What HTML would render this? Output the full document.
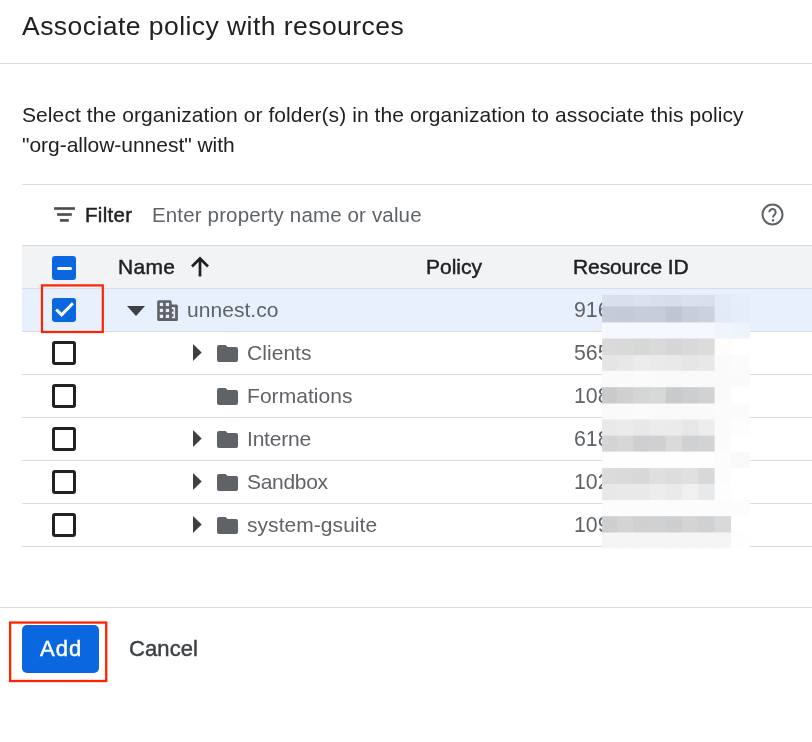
<!DOCTYPE html>
<html><head><meta charset="utf-8">
<style>
html,body{margin:0;padding:0;background:#fff;width:812px;height:742px;overflow:hidden;position:relative}
body{font-family:"Liberation Sans",sans-serif;color:#202124;-webkit-font-smoothing:antialiased}
.t,.rt,.num{will-change:transform}
.a{position:absolute}
.t{position:absolute;white-space:nowrap;line-height:1}
.hl{position:absolute;height:1px;background:#dadce0}
.cb{position:absolute;left:52px;width:18px;height:18px;border:3px solid #202124;border-radius:3px}
.cbf{position:absolute;left:52px;width:24px;height:24px;background:#0b67e0;border-radius:3px}
.rt{position:absolute;white-space:nowrap;line-height:1;font-size:21px;color:#5f6368;letter-spacing:0.05px;margin-top:-0.4px;margin-left:-0.5px}
.num{position:absolute;left:573.5px;white-space:nowrap;line-height:1;font-size:21.3px;color:#5f6368;margin-top:0.3px}
.tri{position:absolute;width:0;height:0;border-top:8.5px solid transparent;border-bottom:8.5px solid transparent;border-left:9px solid #3c4043}
.md{font-weight:normal;-webkit-text-stroke:0.45px currentColor}
.mz i{position:absolute;display:block}
</style></head><body>
<!-- title -->
<div class="t" style="left:22px;top:13.2px;font-size:26.5px;letter-spacing:0.45px;color:#202124">Associate policy with resources</div>
<div class="hl" style="left:0;top:63px;width:812px"></div>

<div class="t" style="left:22px;top:104.1px;font-size:21px;letter-spacing:0.09px">Select the organization or folder(s) in the organization to associate this policy</div>
<div class="t" style="left:22px;top:134.1px;font-size:21px;letter-spacing:-0.03px">"org-allow-unnest" with</div>

<!-- table -->
<div class="hl" style="left:22px;top:184px;width:790px"></div>
<!-- filter icon -->
<svg class="a" style="left:50px;top:204px" width="30" height="20" viewBox="50 204 30 20"><g fill="#474a4f">
<rect x="54.1" y="207.2" width="20.8" height="2.6"/><rect x="57.1" y="213.2" width="14.7" height="2.6"/><rect x="60" y="219.1" width="8.8" height="2.6"/></g></svg>
<div class="t md" style="left:84.5px;top:204.5px;font-size:20.5px;color:#202124;letter-spacing:0.3px">Filter</div>
<div class="t" style="left:152px;top:204.5px;font-size:20.5px;color:#5f6368;letter-spacing:0.15px">Enter property name or value</div>
<svg class="a" style="left:760px;top:202px" width="25" height="25" viewBox="0 0 25 25">
  <circle cx="12.5" cy="12.5" r="10" fill="none" stroke="#5f6368" stroke-width="2"/>
  <path d="M9.3 10.2a3.2 3.2 0 1 1 5.6 2.1c-1 1-1.9 1.5-1.9 3.2" fill="none" stroke="#5f6368" stroke-width="2"/>
  <rect x="11.9" y="17.2" width="2.2" height="2.2" fill="#5f6368"/>
</svg>

<!-- header -->
<div class="hl" style="left:22px;top:245px;width:790px"></div>
<div class="a" style="left:22px;top:246px;width:790px;height:42px;background:#f1f3f4"></div>
<div class="cbf" style="top:256px"></div>
<div class="a" style="left:57px;top:267px;width:15px;height:3px;background:#fff;border-radius:1.5px"></div>
<div class="t md" style="left:118px;top:256.1px;font-size:21px;color:#202124;letter-spacing:0.3px">Name</div>
<svg class="a" style="left:190px;top:256px" width="20" height="22" viewBox="0 0 20 22">
  <path d="M10 20.5V2.5M2 10.5L10 2.5L18 10.5" fill="none" stroke="#202124" stroke-width="2.7"/>
</svg>
<div class="t md" style="left:426px;top:256.1px;font-size:21px;color:#202124;letter-spacing:0px">Policy</div>
<div class="t md" style="left:573px;top:256.1px;font-size:21px;color:#202124;letter-spacing:-0.1px">Resource ID</div>
<div class="hl" style="left:22px;top:288px;width:790px"></div>

<!-- row 1 selected -->
<div class="a" style="left:22px;top:289px;width:790px;height:42px;background:#e8f0fe"></div>
<div class="cbf" style="top:298px"></div>
<svg class="a" style="left:52px;top:298px" width="24" height="24" viewBox="0 0 24 24">
  <path d="M4.2 11.5L9.6 16.9L20.9 5.3" fill="none" stroke="#fff" stroke-width="3"/>
</svg>
<div class="a" style="left:127px;top:306px;width:0;height:0;border-left:9px solid transparent;border-right:9px solid transparent;border-top:10px solid #3c4043"></div>
<svg class="a" style="left:154px;top:297px" width="28" height="26" viewBox="154 297 28 26">
  <path d="M157.2 301.7Q157.2 300.2 158.7 300.2H170.2Q171.7 300.2 171.7 301.7V304.5H176.4Q177.9 304.5 177.9 306V319.4Q177.9 320.9 176.4 320.9H158.7Q157.2 320.9 157.2 319.4Z" fill="#5f6368"/>
  <g fill="#e8f0fe">
    <rect x="159.8" y="302.8" width="3.3" height="3.3"/><rect x="165.8" y="302.8" width="3.3" height="3.3"/>
    <rect x="159.8" y="308.8" width="3.3" height="3.3"/><rect x="165.8" y="308.8" width="3.3" height="3.3"/>
    <rect x="159.8" y="314.7" width="3.3" height="3.3"/><rect x="165.8" y="314.7" width="3.3" height="3.3"/>
    <rect x="171.9" y="307.2" width="3.2" height="11"/>
  </g>
  <g fill="#5f6368"><rect x="171.9" y="309.1" width="1.6" height="2.6"/><rect x="171.9" y="313.8" width="1.6" height="2.8"/></g>
</svg>
<div class="rt" style="left:187px;top:299.5px">unnest.co</div>
<div class="num" style="top:299.5px">916</div>
<div class="hl" style="left:22px;top:331px;width:790px"></div>

<!-- row 2 -->
<div class="cb" style="top:341px"></div>
<svg class="a" style="left:190px;top:341px" width="16" height="24" viewBox="190 341 16 24"><polygon points="193,344.1 201.7,352.6 193,361.1" fill="#3c4043"/></svg>
<svg class="a fo" style="left:217px;top:345px" width="21" height="17" viewBox="0 0 21 17"><path d="M0 2Q0 0 2 0H8.6L10.6 2H19Q21 2 21 4V15Q21 17 19 17H2Q0 17 0 15Z" fill="#5f6368"/></svg>
<div class="rt" style="left:247px;top:342.5px">Clients</div>
<div class="num" style="top:342.5px">565</div>
<div class="hl" style="left:22px;top:374px;width:790px"></div>

<!-- row 3 -->
<div class="cb" style="top:384px"></div>
<svg class="a fo" style="left:217px;top:388px" width="21" height="17" viewBox="0 0 21 17"><path d="M0 2Q0 0 2 0H8.6L10.6 2H19Q21 2 21 4V15Q21 17 19 17H2Q0 17 0 15Z" fill="#5f6368"/></svg>
<div class="rt" style="left:247px;top:385.5px">Formations</div>
<div class="num" style="top:385.5px">108</div>
<div class="hl" style="left:22px;top:417px;width:790px"></div>

<!-- row 4 -->
<div class="cb" style="top:427px"></div>
<svg class="a" style="left:190px;top:427px" width="16" height="24" viewBox="190 427 16 24"><polygon points="193,430.1 201.7,438.6 193,447.1" fill="#3c4043"/></svg>
<svg class="a fo" style="left:217px;top:431px" width="21" height="17" viewBox="0 0 21 17"><path d="M0 2Q0 0 2 0H8.6L10.6 2H19Q21 2 21 4V15Q21 17 19 17H2Q0 17 0 15Z" fill="#5f6368"/></svg>
<div class="rt" style="left:247px;top:428.5px;letter-spacing:-0.2px">Interne</div>
<div class="num" style="top:428.5px">618</div>
<div class="hl" style="left:22px;top:460px;width:790px"></div>

<!-- row 5 -->
<div class="cb" style="top:470px"></div>
<svg class="a" style="left:190px;top:470px" width="16" height="24" viewBox="190 470 16 24"><polygon points="193,473.1 201.7,481.6 193,490.1" fill="#3c4043"/></svg>
<svg class="a fo" style="left:217px;top:474px" width="21" height="17" viewBox="0 0 21 17"><path d="M0 2Q0 0 2 0H8.6L10.6 2H19Q21 2 21 4V15Q21 17 19 17H2Q0 17 0 15Z" fill="#5f6368"/></svg>
<div class="rt" style="left:247px;top:471.5px;letter-spacing:-0.3px">Sandbox</div>
<div class="num" style="top:471.5px">102</div>
<div class="hl" style="left:22px;top:503px;width:790px"></div>

<!-- row 6 -->
<div class="cb" style="top:513px"></div>
<svg class="a" style="left:190px;top:513px" width="16" height="24" viewBox="190 513 16 24"><polygon points="193,516.1 201.7,524.6 193,533.1" fill="#3c4043"/></svg>
<svg class="a fo" style="left:217px;top:517px" width="21" height="17" viewBox="0 0 21 17"><path d="M0 2Q0 0 2 0H8.6L10.6 2H19Q21 2 21 4V15Q21 17 19 17H2Q0 17 0 15Z" fill="#5f6368"/></svg>
<div class="rt" style="left:247px;top:514.5px">system-gsuite</div>
<div class="num" style="top:514.5px">109</div>
<div class="hl" style="left:22px;top:546px;width:790px"></div>

<!-- mosaic -->
<svg class="a" style="left:0;top:0" width="812" height="742" viewBox="0 0 812 742"><rect x="602.1" y="294.9" width="15.8" height="12.2" fill="#d9dfeb"/><rect x="617.2" y="294.9" width="16.9" height="12.2" fill="#d8deea"/><rect x="633.4" y="294.9" width="16.8" height="12.2" fill="#dbe1ed"/><rect x="649.5" y="294.9" width="16.9" height="12.2" fill="#d8deea"/><rect x="665.7" y="294.9" width="17.0" height="12.2" fill="#d7dde9"/><rect x="682.0" y="294.9" width="17.0" height="12.2" fill="#dbe1ec"/><rect x="698.3" y="294.9" width="17.0" height="12.2" fill="#d9dfeb"/><rect x="714.6" y="294.9" width="17.1" height="12.2" fill="#e3eaf8"/><rect x="731.0" y="294.9" width="18.9" height="12.2" fill="#e6edfb"/><rect x="602.1" y="306.4" width="15.8" height="16.7" fill="#c5cbd8"/><rect x="617.2" y="306.4" width="16.9" height="16.7" fill="#c4cad7"/><rect x="633.4" y="306.4" width="16.8" height="16.7" fill="#c7cddb"/><rect x="649.5" y="306.4" width="16.9" height="16.7" fill="#c6ccd9"/><rect x="665.7" y="306.4" width="17.0" height="16.7" fill="#bfc5d2"/><rect x="682.0" y="306.4" width="17.0" height="16.7" fill="#c8ced9"/><rect x="698.3" y="306.4" width="17.0" height="16.7" fill="#cbd1dd"/><rect x="714.6" y="306.4" width="17.1" height="16.7" fill="#e2e9f7"/><rect x="731.0" y="306.4" width="18.9" height="16.7" fill="#e5ecfa"/><rect x="602.1" y="322.4" width="15.8" height="16.8" fill="#f5f9ff"/><rect x="617.2" y="322.4" width="16.9" height="16.8" fill="#f5f9ff"/><rect x="633.4" y="322.4" width="16.8" height="16.8" fill="#f5f9ff"/><rect x="649.5" y="322.4" width="16.9" height="16.8" fill="#f5f9ff"/><rect x="665.7" y="322.4" width="17.0" height="16.8" fill="#f5f9ff"/><rect x="682.0" y="322.4" width="17.0" height="16.8" fill="#f5f9ff"/><rect x="698.3" y="322.4" width="17.0" height="16.8" fill="#f5f9ff"/><rect x="714.6" y="322.4" width="17.1" height="16.8" fill="#eff4fd"/><rect x="731.0" y="322.4" width="18.9" height="16.8" fill="#eef3fc"/><rect x="602.1" y="338.5" width="15.8" height="17.2" fill="#dadada"/><rect x="617.2" y="338.5" width="16.9" height="17.2" fill="#d9d9d9"/><rect x="633.4" y="338.5" width="16.8" height="17.2" fill="#d6d8d6"/><rect x="649.5" y="338.5" width="16.9" height="17.2" fill="#dadada"/><rect x="665.7" y="338.5" width="17.0" height="17.2" fill="#d6d6d6"/><rect x="682.0" y="338.5" width="17.0" height="17.2" fill="#d8d9d8"/><rect x="698.3" y="338.5" width="17.0" height="17.2" fill="#dcdcdc"/><rect x="714.6" y="338.5" width="17.1" height="17.2" fill="#fffdfb"/><rect x="731.0" y="338.5" width="18.9" height="17.2" fill="#ffffff"/><rect x="602.1" y="355.0" width="15.8" height="16.5" fill="#e5e5e6"/><rect x="617.2" y="355.0" width="16.9" height="16.5" fill="#e8e8e8"/><rect x="633.4" y="355.0" width="16.8" height="16.5" fill="#ececec"/><rect x="649.5" y="355.0" width="16.9" height="16.5" fill="#eaeaea"/><rect x="665.7" y="355.0" width="17.0" height="16.5" fill="#e9e9ea"/><rect x="682.0" y="355.0" width="17.0" height="16.5" fill="#e6e6e6"/><rect x="698.3" y="355.0" width="17.0" height="16.5" fill="#e7e8e7"/><rect x="714.6" y="355.0" width="17.1" height="16.5" fill="#fafafa"/><rect x="731.0" y="355.0" width="18.9" height="16.5" fill="#fbfbfb"/><rect x="602.1" y="370.8" width="15.8" height="17.1" fill="#fafafa"/><rect x="617.2" y="370.8" width="16.9" height="17.1" fill="#fafafa"/><rect x="633.4" y="370.8" width="16.8" height="17.1" fill="#fbfbfb"/><rect x="649.5" y="370.8" width="16.9" height="17.1" fill="#fafafa"/><rect x="665.7" y="370.8" width="17.0" height="17.1" fill="#f9f9f9"/><rect x="682.0" y="370.8" width="17.0" height="17.1" fill="#fafafa"/><rect x="698.3" y="370.8" width="17.0" height="17.1" fill="#fafafa"/><rect x="714.6" y="370.8" width="17.1" height="17.1" fill="#fafafa"/><rect x="731.0" y="370.8" width="18.9" height="17.1" fill="#fafafa"/><rect x="602.1" y="387.2" width="15.8" height="17.0" fill="#c9cacb"/><rect x="617.2" y="387.2" width="16.9" height="17.0" fill="#d0d0d1"/><rect x="633.4" y="387.2" width="16.8" height="17.0" fill="#d4d5d6"/><rect x="649.5" y="387.2" width="16.9" height="17.0" fill="#d7d8d8"/><rect x="665.7" y="387.2" width="17.0" height="17.0" fill="#c9cacc"/><rect x="682.0" y="387.2" width="17.0" height="17.0" fill="#cdcecf"/><rect x="698.3" y="387.2" width="17.0" height="17.0" fill="#d1d2d3"/><rect x="714.6" y="387.2" width="17.1" height="17.0" fill="#fafafa"/><rect x="731.0" y="387.2" width="18.9" height="17.0" fill="#ffffff"/><rect x="602.1" y="403.5" width="15.8" height="16.7" fill="#fafafa"/><rect x="617.2" y="403.5" width="16.9" height="16.7" fill="#fafafa"/><rect x="633.4" y="403.5" width="16.8" height="16.7" fill="#fbfbfb"/><rect x="649.5" y="403.5" width="16.9" height="16.7" fill="#fafafa"/><rect x="665.7" y="403.5" width="17.0" height="16.7" fill="#fafafa"/><rect x="682.0" y="403.5" width="17.0" height="16.7" fill="#fafafa"/><rect x="698.3" y="403.5" width="17.0" height="16.7" fill="#fafafa"/><rect x="714.6" y="403.5" width="17.1" height="16.7" fill="#fbfbfb"/><rect x="731.0" y="403.5" width="18.9" height="16.7" fill="#fbfbfb"/><rect x="602.1" y="419.5" width="15.8" height="16.8" fill="#e9e9e9"/><rect x="617.2" y="419.5" width="16.9" height="16.8" fill="#ebebeb"/><rect x="633.4" y="419.5" width="16.8" height="16.8" fill="#e8e8e8"/><rect x="649.5" y="419.5" width="16.9" height="16.8" fill="#ececec"/><rect x="665.7" y="419.5" width="17.0" height="16.8" fill="#ebebeb"/><rect x="682.0" y="419.5" width="17.0" height="16.8" fill="#e6e7e9"/><rect x="698.3" y="419.5" width="17.0" height="16.8" fill="#ededed"/><rect x="714.6" y="419.5" width="17.1" height="16.8" fill="#fbfbfb"/><rect x="731.0" y="419.5" width="18.9" height="16.8" fill="#fdfdfd"/><rect x="602.1" y="435.6" width="15.8" height="16.7" fill="#d4d4d6"/><rect x="617.2" y="435.6" width="16.9" height="16.7" fill="#d7d7d8"/><rect x="633.4" y="435.6" width="16.8" height="16.7" fill="#cfcfd1"/><rect x="649.5" y="435.6" width="16.9" height="16.7" fill="#d0d0d2"/><rect x="665.7" y="435.6" width="17.0" height="16.7" fill="#dadada"/><rect x="682.0" y="435.6" width="17.0" height="16.7" fill="#d0d1d2"/><rect x="698.3" y="435.6" width="17.0" height="16.7" fill="#d3d3d5"/><rect x="714.6" y="435.6" width="17.1" height="16.7" fill="#fbfbfb"/><rect x="731.0" y="435.6" width="18.9" height="16.7" fill="#ffffff"/><rect x="602.1" y="451.6" width="15.8" height="17.2" fill="#fefefe"/><rect x="617.2" y="451.6" width="16.9" height="17.2" fill="#fefefe"/><rect x="633.4" y="451.6" width="16.8" height="17.2" fill="#fefefe"/><rect x="649.5" y="451.6" width="16.9" height="17.2" fill="#fefefe"/><rect x="665.7" y="451.6" width="17.0" height="17.2" fill="#fefefe"/><rect x="682.0" y="451.6" width="17.0" height="17.2" fill="#fefefe"/><rect x="698.3" y="451.6" width="17.0" height="17.2" fill="#fefefe"/><rect x="714.6" y="451.6" width="17.1" height="17.2" fill="#fcfcfc"/><rect x="731.0" y="451.6" width="18.9" height="17.2" fill="#f9f9f9"/><rect x="602.1" y="468.1" width="15.8" height="16.6" fill="#dadbdd"/><rect x="617.2" y="468.1" width="16.9" height="16.6" fill="#dadada"/><rect x="633.4" y="468.1" width="16.8" height="16.6" fill="#d7d8da"/><rect x="649.5" y="468.1" width="16.9" height="16.6" fill="#dfdfdf"/><rect x="665.7" y="468.1" width="17.0" height="16.6" fill="#dcdddf"/><rect x="682.0" y="468.1" width="17.0" height="16.6" fill="#e0e0e0"/><rect x="698.3" y="468.1" width="17.0" height="16.6" fill="#d7d8da"/><rect x="714.6" y="468.1" width="17.1" height="16.6" fill="#fcfcfc"/><rect x="731.0" y="468.1" width="18.9" height="16.6" fill="#ffffff"/><rect x="602.1" y="484.0" width="15.8" height="16.7" fill="#e8e8e8"/><rect x="617.2" y="484.0" width="16.9" height="16.7" fill="#e9e9e9"/><rect x="633.4" y="484.0" width="16.8" height="16.7" fill="#e9e9e9"/><rect x="649.5" y="484.0" width="16.9" height="16.7" fill="#ededed"/><rect x="665.7" y="484.0" width="17.0" height="16.7" fill="#eaeaea"/><rect x="682.0" y="484.0" width="17.0" height="16.7" fill="#f0f0f0"/><rect x="698.3" y="484.0" width="17.0" height="16.7" fill="#e8e9eb"/><rect x="714.6" y="484.0" width="17.1" height="16.7" fill="#fdfdfd"/><rect x="731.0" y="484.0" width="18.9" height="16.7" fill="#ffffff"/><rect x="602.1" y="500.0" width="15.8" height="16.9" fill="#fcfcfc"/><rect x="617.2" y="500.0" width="16.9" height="16.9" fill="#fcfcfc"/><rect x="633.4" y="500.0" width="16.8" height="16.9" fill="#fcfcfc"/><rect x="649.5" y="500.0" width="16.9" height="16.9" fill="#fcfcfc"/><rect x="665.7" y="500.0" width="17.0" height="16.9" fill="#fcfcfc"/><rect x="682.0" y="500.0" width="17.0" height="16.9" fill="#fcfcfc"/><rect x="698.3" y="500.0" width="17.0" height="16.9" fill="#fcfcfc"/><rect x="714.6" y="500.0" width="17.1" height="16.9" fill="#fcfcfc"/><rect x="731.0" y="500.0" width="18.9" height="16.9" fill="#fcfcfc"/><rect x="602.1" y="516.2" width="15.8" height="17.0" fill="#cdcecf"/><rect x="617.2" y="516.2" width="16.9" height="17.0" fill="#d4d4d5"/><rect x="633.4" y="516.2" width="16.8" height="17.0" fill="#d0d0d1"/><rect x="649.5" y="516.2" width="16.9" height="17.0" fill="#d0d1d2"/><rect x="665.7" y="516.2" width="17.0" height="17.0" fill="#cdcecf"/><rect x="682.0" y="516.2" width="17.0" height="17.0" fill="#d4d4d5"/><rect x="698.3" y="516.2" width="17.0" height="17.0" fill="#d0d1d2"/><rect x="714.6" y="516.2" width="17.1" height="17.0" fill="#d8d9da"/><rect x="731.0" y="516.2" width="18.9" height="17.0" fill="#ffffff"/><rect x="602.1" y="532.5" width="15.8" height="15.8" fill="#f5f5f5"/><rect x="617.2" y="532.5" width="16.9" height="15.8" fill="#f5f5f5"/><rect x="633.4" y="532.5" width="16.8" height="15.8" fill="#f5f5f5"/><rect x="649.5" y="532.5" width="16.9" height="15.8" fill="#f5f5f5"/><rect x="665.7" y="532.5" width="17.0" height="15.8" fill="#f5f5f5"/><rect x="682.0" y="532.5" width="17.0" height="15.8" fill="#f5f5f5"/><rect x="698.3" y="532.5" width="17.0" height="15.8" fill="#f5f5f5"/><rect x="714.6" y="532.5" width="17.1" height="15.8" fill="#f5f5f5"/><rect x="731.0" y="532.5" width="18.9" height="15.8" fill="#fefefe"/></svg>

<!-- red box 1 -->

<!-- footer -->
<div class="hl" style="left:0;top:607px;width:812px"></div>
<div class="a" style="left:22px;top:625px;width:77px;height:48px;background:#0b67e0;border-radius:5px"></div>
<div class="t md" style="left:40px;top:637.5px;font-size:22px;color:#fff;letter-spacing:1px">Add</div>
<div class="t md" style="left:129px;top:637.5px;font-size:22px;color:#3c4043;letter-spacing:0.1px">Cancel</div>
<svg class="a" style="left:0;top:0" width="812" height="742" viewBox="0 0 812 742"><g fill="none" stroke="#ff2200">
<rect x="41.95" y="285.4" width="60.85" height="46.6" stroke-width="2.2"/>
<rect x="10.15" y="622.55" width="96.1" height="58.45" stroke-width="2.3"/>
</g></svg>
</body></html>
